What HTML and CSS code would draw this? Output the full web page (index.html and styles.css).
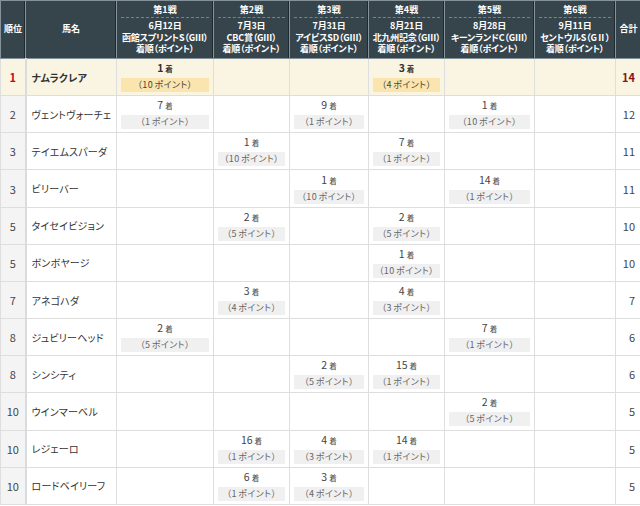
FILE: index.html
```html
<!DOCTYPE html>
<html lang="ja">
<head>
<meta charset="utf-8">
<link rel="stylesheet" href="styles.css">
</head>
<body>
<table class="standings">
  <colgroup>
    <col class="c-rank"><col class="c-name"><col class="c-r1"><col class="c-r2"><col class="c-r3"><col class="c-r4"><col class="c-r5"><col class="c-r6"><col class="c-total">
  </colgroup>
  <thead>
    <tr>
      <th class="mid">順位</th>
      <th class="mid">馬名</th>
      <th><div class="round">第1戦</div><div class="info">6月12日<br>函館スプリントS（GⅢ）<br>着順（ポイント）</div></th>
      <th><div class="round">第2戦</div><div class="info">7月3日<br>CBC賞（GⅢ）<br>着順（ポイント）</div></th>
      <th><div class="round">第3戦</div><div class="info">7月31日<br>アイビスSD（GⅢ）<br>着順（ポイント）</div></th>
      <th><div class="round">第4戦</div><div class="info">8月21日<br>北九州記念（GⅢ）<br>着順（ポイント）</div></th>
      <th><div class="round">第5戦</div><div class="info">8月28日<br>キーンランドC（GⅢ）<br>着順（ポイント）</div></th>
      <th><div class="round">第6戦</div><div class="info">9月11日<br>セントウルS（GⅡ）<br>着順（ポイント）</div></th>
      <th class="mid">合計</th>
    </tr>
  </thead>
  <tbody>
    <tr class="top">
      <td class="rank">1</td><td class="name">ナムラクレア</td>
      <td class="res"><div class="pl">1<small>着</small></div><div class="pt">（10 ポイント）</div></td>
      <td></td><td></td>
      <td class="res"><div class="pl">3<small>着</small></div><div class="pt">（4 ポイント）</div></td>
      <td></td><td></td>
      <td class="total">14</td>
    </tr>
    <tr>
      <td class="rank">2</td><td class="name">ヴェントヴォーチェ</td>
      <td class="res"><div class="pl">7<small>着</small></div><div class="pt">（1 ポイント）</div></td>
      <td></td>
      <td class="res"><div class="pl">9<small>着</small></div><div class="pt">（1 ポイント）</div></td>
      <td></td>
      <td class="res"><div class="pl">1<small>着</small></div><div class="pt">（10 ポイント）</div></td>
      <td></td>
      <td class="total">12</td>
    </tr>
    <tr>
      <td class="rank">3</td><td class="name">テイエムスパーダ</td>
      <td></td>
      <td class="res"><div class="pl">1<small>着</small></div><div class="pt">（10 ポイント）</div></td>
      <td></td>
      <td class="res"><div class="pl">7<small>着</small></div><div class="pt">（1 ポイント）</div></td>
      <td></td><td></td>
      <td class="total">11</td>
    </tr>
    <tr>
      <td class="rank">3</td><td class="name">ビリーバー</td>
      <td></td><td></td>
      <td class="res"><div class="pl">1<small>着</small></div><div class="pt">（10 ポイント）</div></td>
      <td></td>
      <td class="res"><div class="pl">14<small>着</small></div><div class="pt">（1 ポイント）</div></td>
      <td></td>
      <td class="total">11</td>
    </tr>
    <tr>
      <td class="rank">5</td><td class="name">タイセイビジョン</td>
      <td></td>
      <td class="res"><div class="pl">2<small>着</small></div><div class="pt">（5 ポイント）</div></td>
      <td></td>
      <td class="res"><div class="pl">2<small>着</small></div><div class="pt">（5 ポイント）</div></td>
      <td></td><td></td>
      <td class="total">10</td>
    </tr>
    <tr>
      <td class="rank">5</td><td class="name">ボンボヤージ</td>
      <td></td><td></td><td></td>
      <td class="res"><div class="pl">1<small>着</small></div><div class="pt">（10 ポイント）</div></td>
      <td></td><td></td>
      <td class="total">10</td>
    </tr>
    <tr>
      <td class="rank">7</td><td class="name">アネゴハダ</td>
      <td></td>
      <td class="res"><div class="pl">3<small>着</small></div><div class="pt">（4 ポイント）</div></td>
      <td></td>
      <td class="res"><div class="pl">4<small>着</small></div><div class="pt">（3 ポイント）</div></td>
      <td></td><td></td>
      <td class="total">7</td>
    </tr>
    <tr>
      <td class="rank">8</td><td class="name">ジュビリーヘッド</td>
      <td class="res"><div class="pl">2<small>着</small></div><div class="pt">（5 ポイント）</div></td>
      <td></td><td></td><td></td>
      <td class="res"><div class="pl">7<small>着</small></div><div class="pt">（1 ポイント）</div></td>
      <td></td>
      <td class="total">6</td>
    </tr>
    <tr>
      <td class="rank">8</td><td class="name">シンシティ</td>
      <td></td><td></td>
      <td class="res"><div class="pl">2<small>着</small></div><div class="pt">（5 ポイント）</div></td>
      <td class="res"><div class="pl">15<small>着</small></div><div class="pt">（1 ポイント）</div></td>
      <td></td><td></td>
      <td class="total">6</td>
    </tr>
    <tr>
      <td class="rank">10</td><td class="name">ウインマーベル</td>
      <td></td><td></td><td></td><td></td>
      <td class="res"><div class="pl">2<small>着</small></div><div class="pt">（5 ポイント）</div></td>
      <td></td>
      <td class="total">5</td>
    </tr>
    <tr>
      <td class="rank">10</td><td class="name">レジェーロ</td>
      <td></td>
      <td class="res"><div class="pl">16<small>着</small></div><div class="pt">（1 ポイント）</div></td>
      <td class="res"><div class="pl">4<small>着</small></div><div class="pt">（3 ポイント）</div></td>
      <td class="res"><div class="pl">14<small>着</small></div><div class="pt">（1 ポイント）</div></td>
      <td></td><td></td>
      <td class="total">5</td>
    </tr>
    <tr>
      <td class="rank">10</td><td class="name">ロードベイリーフ</td>
      <td></td>
      <td class="res"><div class="pl">6<small>着</small></div><div class="pt">（1 ポイント）</div></td>
      <td class="res"><div class="pl">3<small>着</small></div><div class="pt">（4 ポイント）</div></td>
      <td></td><td></td><td></td>
      <td class="total">5</td>
    </tr>
  </tbody>
</table>
</body>
</html>
```

FILE: styles.css
```css
html, body {
  margin: 0;
  padding: 0;
  background: #ffffff;
}
body {
  font-family: "Noto Sans CJK JP", "Noto Sans", sans-serif;
  font-feature-settings: "palt";
  color: #444;
}
.standings {
  width: 640px;
  table-layout: fixed;
  border-collapse: collapse;
}
.c-rank { width: 25px; }
.c-name { width: 91px; }
.c-r1 { width: 97px; }
.c-r2 { width: 76px; }
.c-r3 { width: 79px; }
.c-r4 { width: 76px; }
.c-r5 { width: 90px; }
.c-r6 { width: 81px; }
.c-total { width: 26px; }

.standings th {
  box-sizing: border-box;
  background: #36454c;
  color: #fff;
  font-weight: bold;
  font-size: 9px;
  line-height: 11px;
  height: 58px;
  padding: 0 0 2px;
  vertical-align: top;
  text-align: center;
  border: 1px solid #86929a;
  box-shadow: inset -1px 0 0 #1f2a30;
  white-space: nowrap;
  overflow: hidden;
}
.standings th.mid {
  vertical-align: middle;
}
.round {
  margin: 0 4px;
  padding: 3px 0 2px;
  line-height: 11px;
  border-bottom: 1px dashed #76838a;
}
.info {
  padding-top: 2px;
  font-size: 9px;
  line-height: 11.5px;
  letter-spacing: -0.2px;
}

.standings td {
  box-sizing: border-box;
  border: 1px solid #dedede;
  height: 37.17px;
  padding: 0;
  vertical-align: middle;
  font-size: 10px;
}
.standings td.rank {
  text-align: center;
  font-size: 11px;
  background: #f4f4f4;
  border-right: 2px solid #d9dcde;
  color: #444;
}
.standings td.name {
  padding-left: 5px;
  font-size: 10px;
  letter-spacing: 0.2px;
  white-space: nowrap;
  overflow: hidden;
  color: #333;
}
.standings td.res {
  padding: 2px 4px 3px;
  text-align: center;
}
.pl {
  font-size: 10.5px;
  line-height: 13px;
  color: #444;
}
.pl small {
  font-size: 7.5px;
  margin-left: 2px;
  vertical-align: top;
  line-height: 15px;
}
.pt {
  margin-top: 2px;
  background: #f0f0f0;
  font-size: 9px;
  line-height: 14px;
  height: 14px;
  color: #666;
  white-space: nowrap;
  letter-spacing: 0.4px;
  word-spacing: -1px;
}
.standings td.total {
  text-align: right;
  padding-right: 6px;
  font-size: 11px;
  color: #444;
}

.top td {
  background: #f9f5e2;
}
.top td.rank {
  background: #f9f5e2;
  color: #d0021b;
  font-weight: bold;
}
.top td.name {
  font-weight: bold;
  color: #333;
}
.top .pl {
  color: #333;
  font-weight: bold;
}
.top .pt {
  background: #fbe5ae;
  color: #444;
}
.top td.total {
  color: #8a1212;
  font-weight: bold;
}
```
